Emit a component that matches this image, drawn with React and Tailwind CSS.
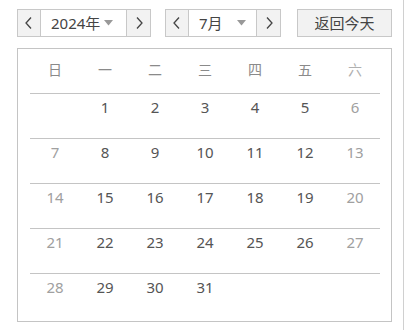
import React from 'react';

const FONT = { fontFamily: '"Noto Sans", "Noto Sans CJK SC", sans-serif' };

function Chevron({ dir = 'left' }) {
  return (
    <svg width="10" height="14" viewBox="0 0 10 14" fill="none">
      {dir === 'left' ? (
        <polyline points="7,1.5 2,7 7,12.5" stroke="#444" strokeWidth="1.3" />
      ) : (
        <polyline points="3,1.5 8,7 3,12.5" stroke="#444" strokeWidth="1.3" />
      )}
    </svg>
  );
}

function Caret() {
  return (
    <svg width="9" height="6" viewBox="0 0 9 6">
      <polygon points="0,0 9,0 4.5,5.5" fill="#999" />
    </svg>
  );
}

function NavButton({ dir, width }) {
  return (
    <button className={`flex h-[28px] items-center justify-center border border-[#c8c8c8] bg-[#f2f2f2] ${width}`}>
      <Chevron dir={dir} />
    </button>
  );
}

export default function App() {
  const weekdays = ['日', '一', '二', '三', '四', '五', '六'];
  const weeks = [
    [null, 1, 2, 3, 4, 5, 6],
    [7, 8, 9, 10, 11, 12, 13],
    [14, 15, 16, 17, 18, 19, 20],
    [21, 22, 23, 24, 25, 26, 27],
    [28, 29, 30, 31, null, null, null],
  ];

  return (
    <div className="h-[330px] w-[404px] border-r border-[#d0d0d0] bg-white" style={FONT}>
      <div className="flex items-center pl-[17px] pt-[9px]">
        {/* year picker */}
        <div className="flex items-center">
          <NavButton dir="left" width="w-[24px]" />
          <div className="flex h-[28px] w-[85px] items-center border-y border-[#c8c8c8] bg-white pl-[10px] text-[15px] text-[#444]">
            <span>2024年</span>
            <span className="ml-[4px] flex"><Caret /></span>
          </div>
          <NavButton dir="right" width="w-[25px]" />
        </div>

        {/* month picker */}
        <div className="ml-[14px] flex items-center">
          <NavButton dir="left" width="w-[24px]" />
          <div className="flex h-[28px] w-[67px] items-center justify-between border-y border-[#c8c8c8] bg-white pl-[10px] pr-[10px] text-[15px] text-[#444]">
            <span>7月</span>
            <span className="flex"><Caret /></span>
          </div>
          <NavButton dir="right" width="w-[25px]" />
        </div>

        <button className="ml-[16px] h-[28px] w-[95px] border border-[#c8c8c8] bg-[#f2f2f2] text-[15px] text-[#444]">
          返回今天
        </button>
      </div>

      <div className="ml-[17px] mt-[11px] h-[274px] w-[375px] border border-[#c4c4c4] pl-[12px] pr-[11px]">
        <div className="grid h-[44px] grid-cols-7 items-center pb-[4px] text-[14px] text-[#8a8a8a]">
          {weekdays.map((d) => (
            <div key={d} className={`text-center ${d === '六' ? 'text-[#b0b0b0]' : ''}`}>
              {d}
            </div>
          ))}
        </div>
        {weeks.map((week, i) => (
          <div key={i} className="grid h-[45px] grid-cols-7 border-t border-[#c4c4c4] pt-[3px] text-[15px]">
            {week.map((day, j) => (
              <div
                key={j}
                className={`h-[20px] text-center leading-[20px] ${j === 0 || j === 6 ? 'text-[#a0a0a0]' : 'text-[#555]'}`}
              >
                {day ?? ''}
              </div>
            ))}
          </div>
        ))}
      </div>
    </div>
  );
}
